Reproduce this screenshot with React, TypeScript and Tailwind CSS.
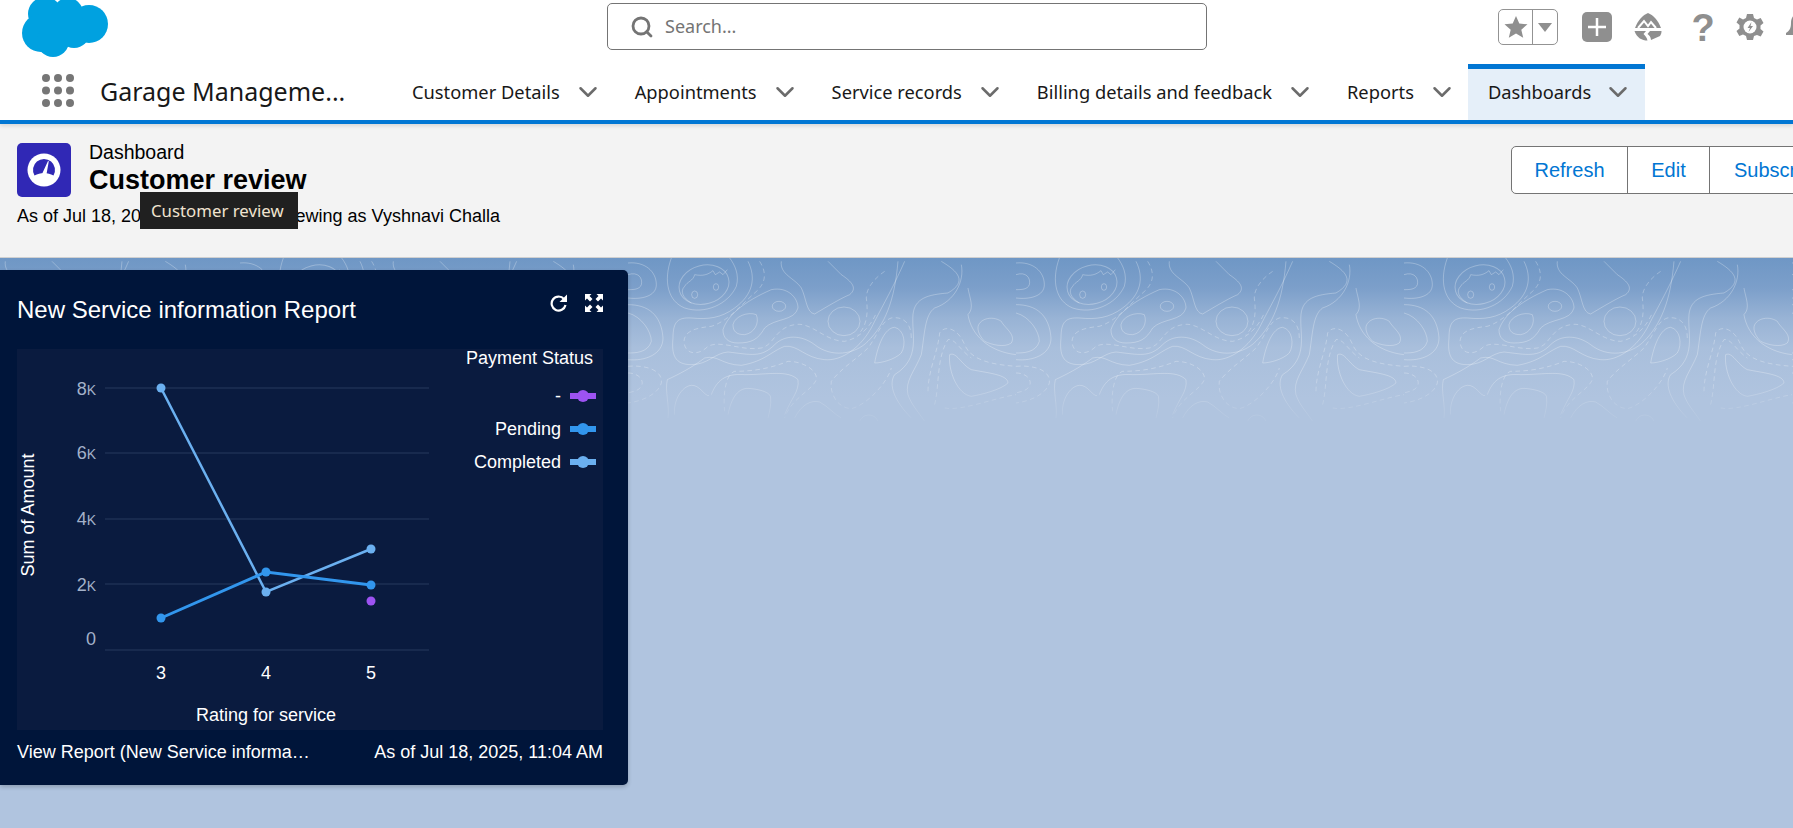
import { ChevronDown, Search } from "lucide-react";

const navItems = ["Customer Details", "Appointments", "Service records", "Billing details and feedback", "Reports"];

const yTicks = [
  { label: "8", unit: "K", y: 388, ty: 389 },
  { label: "6", unit: "K", y: 453, ty: 453 },
  { label: "4", unit: "K", y: 519, ty: 519 },
  { label: "2", unit: "K", y: 584, ty: 585 },
  { label: "0", unit: "", y: 650, ty: 639 },
];

const legend = [
  { label: "-", color: "#9d53f2", y: 396 },
  { label: "Pending", color: "#3296ed", y: 429 },
  { label: "Completed", color: "#6bb0f0", y: 462 },
];

// contour lines behind the dashboard, one tile of the repeating banner
const solidLines = [
  "M130 0C105 70 120 130 170 150C230 170 300 140 325 85C335 50 320 20 305 0",
  "M190 135C165 120 155 100 170 85C178 70 195 70 200 50C225 55 240 50 255 38L262 50L275 42L285 50L298 35",
  "M0 50C30 40 45 60 40 80C35 95 15 95 0 95",
  "M0 15C50 10 85 40 85 80C85 115 40 125 0 120",
  "M0 140C60 140 100 170 105 240C105 290 50 310 0 305",
  "M0 165C40 175 70 220 70 250C60 285 20 285 0 285",
  "M360 10C385 60 375 110 320 150C280 180 240 185 190 180C150 178 135 190 135 240C130 290 140 320 190 320C240 320 260 285 300 282C370 290 400 300 440 260C470 230 520 230 560 260C610 300 680 290 720 250C770 200 800 130 810 10",
  "M285 215C300 170 350 130 430 95C480 85 510 120 510 150C500 190 440 180 410 210C390 245 370 255 330 255C300 255 285 240 285 215Z",
  "M315 200C320 175 360 160 385 170C395 195 380 225 350 230C325 230 315 220 315 200Z",
  "M460 10C455 50 500 60 520 90C535 120 535 165 560 168C590 150 640 120 665 110C690 90 670 70 640 50L600 10",
  "M830 10C790 100 760 150 735 200C700 270 640 310 590 305C530 300 510 260 470 265C430 280 410 310 340 322C280 320 270 290 230 300C190 330 150 350 118 365C110 400 125 440 120 480",
  "M740 315C750 260 770 210 800 208C830 215 835 260 820 285C800 305 760 315 740 315Z",
  "M940 10C990 40 1020 70 960 105C900 110 860 120 855 170C850 230 880 300 800 350C780 380 800 430 850 480",
  "M1000 20C1010 70 980 130 920 150C890 170 890 230 880 290C860 340 830 370 840 410C850 440 870 460 890 490",
  "M1020 90C1025 120 1040 150 1020 170C1030 230 1080 280 1164 290",
  "M1050 210C1050 185 1090 170 1120 190C1130 210 1165 230 1150 255C1130 270 1090 260 1070 250C1060 240 1050 225 1050 210Z",
  "M965 290C985 280 1000 320 1030 335C1080 345 1140 350 1140 375C1120 395 1060 410 1030 415C990 410 960 340 965 290Z",
  "M250 410C265 370 290 345 350 350C420 350 480 335 510 365C515 400 490 420 470 470",
  "M300 470C310 420 330 385 370 392C400 395 430 405 428 420C430 440 425 460 420 480",
  "M140 470C135 430 160 385 190 382C215 380 230 415 243 413",
  "M500 480C520 440 550 425 575 432C600 445 620 470 640 480",
  "M695 490C705 465 740 465 750 490",
];

const dashedLines = [
  "M395 10C420 50 410 80 380 105C340 140 300 190 250 205C200 210 170 220 168 250C170 290 210 295 240 265C280 245 340 280 400 270C440 260 440 210 500 200C550 190 590 250 650 250C700 240 730 200 745 165",
  "M770 40C740 60 715 90 715 120C720 160 720 200 690 230",
  "M850 240C850 190 820 175 790 180C760 190 750 230 720 270C690 300 640 330 610 370C605 410 630 450 670 452C720 440 780 370 790 330",
  "M0 325C60 320 105 340 100 375C90 410 40 430 0 435",
  "M0 345C30 345 50 365 40 385C30 400 15 400 0 405",
  "M290 460C285 420 290 350 320 340C380 340 430 330 480 310C530 310 570 340 565 365C550 400 490 420 470 480",
  "M900 400C900 340 930 280 935 225C950 200 990 210 1010 260C1030 310 1100 320 1164 325",
  "M920 440C935 380 925 300 960 245C980 240 1000 280 1030 300",
  "M950 450C1000 460 1100 420 1164 410",
];

function SalesforceLogo() {
  return (
    <svg width="86" height="58" viewBox="22 0 86 58" className="block" fill="#00a1e0">
      <circle cx="45" cy="14" r="17" />
      <circle cx="68" cy="13" r="15" />
      <circle cx="89" cy="24" r="19" />
      <circle cx="41" cy="33" r="19" />
      <circle cx="53" cy="41" r="16" />
      <circle cx="74" cy="32" r="16" />
      <rect x="40" y="12" width="40" height="30" />
    </svg>
  );
}

function Waffle() {
  return (
    <svg width="34" height="33" viewBox="0 0 34 33" fill="#767676">
      {[4, 16.5, 29].map((cy) =>
        [5, 17, 29].map((cx) => <circle key={`${cx}-${cy}`} cx={cx} cy={cy} r="4" />),
      )}
    </svg>
  );
}

function GaugeIcon() {
  return (
    <div className="flex h-[54px] w-[54px] items-center justify-center rounded-[5px] bg-[#3028b5]">
      <svg width="34" height="34" viewBox="0 0 34 34">
        <circle cx="17" cy="17" r="16.5" fill="#fff" />
        <path d="M7.500 22.500A11 11 0 1 1 26.500 22.500C23.500 20.800 20.500 20.300 17 20.300S10.500 20.800 7.500 22.500Z" fill="#3028b5" />
        <path d="M14.800 21.500L21 8l.8.3-2.500 14a2.400 2.400 0 0 1-4.500-.8z" fill="#fff" />
      </svg>
    </div>
  );
}

function TrailheadIcon() {
  return (
    <svg width="30" height="30" viewBox="0 0 30 30" fill="#8f8f8f">
      <path d="M15 1C20 3 25 8 28 16H2C5 8 10 3 15 1z" />
      <path d="M5 16l6-7 4 5 3-4 5 6" fill="none" stroke="#fff" strokeWidth="2" />
      <path d="M1.500 19H28.500C28.500 21 28 22.500 27 24L18 28C18 25 16 23 14.500 22L17 19H13L10.500 22C12 23.500 14 25.500 14.500 28.500C9 28.500 4 26 1.500 19z" />
    </svg>
  );
}

function GearIcon() {
  return (
    <svg width="28" height="28" viewBox="0 0 28 28">
      <path
        fill="#8f8f8f"
        d="M11 1h6l1 4 3 1.500 3.700-1.500 2.800 5-3 2.500v3.500l3 2.500-2.800 5-3.700-1.500L18 23l-1 4h-6l-1-4-3-1.500-3.700 1.500-2.800-5 3-2.500v-3.500l-3-2.500 2.800-5L7 6.500 10 5z"
      />
      <circle cx="14" cy="14" r="6.500" fill="#fff" />
      <path fill="#8f8f8f" d="M15.500 9l-4 6h2.500l-1.500 4 4.500-6h-2.500z" />
    </svg>
  );
}

function ContourBanner() {
  return (
    <svg className="absolute inset-x-0 top-0 h-[190px] w-full" aria-hidden="true">
      <defs>
        <linearGradient id="fade" x1="0" y1="0" x2="0" y2="1">
          <stop offset="0" stopColor="#fff" />
          <stop offset="0.62" stopColor="#fff" />
          <stop offset="0.92" stopColor="#000" />
        </linearGradient>
        <mask id="fadeMask">
          <rect width="100%" height="190" fill="url(#fade)" />
        </mask>
        <pattern id="contours" x="240" y="0" width="388" height="190" patternUnits="userSpaceOnUse">
          <g transform="scale(0.3333)" fill="none" stroke="#fff" strokeOpacity="0.28" strokeWidth="3">
            {solidLines.map((d) => (
              <path key={d} d={d} />
            ))}
            <ellipse cx="228" cy="80" rx="76" ry="58" transform="rotate(-15 228 80)" />
            <ellipse cx="200" cy="110" rx="9" ry="11" />
            <ellipse cx="264" cy="87" rx="8" ry="10" />
            <ellipse cx="453" cy="145" rx="20" ry="15" />
            <ellipse cx="648" cy="190" rx="48" ry="43" />
            <g strokeDasharray="14 10">
              {dashedLines.map((d) => (
                <path key={d} d={d} />
              ))}
            </g>
          </g>
        </pattern>
      </defs>
      <rect width="100%" height="190" fill="url(#contours)" mask="url(#fadeMask)" />
    </svg>
  );
}

function ReportChart() {
  // coordinates are page pixels minus the chart panel's origin (17, 349)
  const ox = 17;
  const oy = 349;
  const completed = [
    [161, 388],
    [266, 592],
    [371, 549],
  ];
  const pending = [
    [161, 618],
    [266, 572],
    [371, 585],
  ];
  const pts = (list: number[][]) => list.map(([x, y]) => `${x - ox},${y - oy}`).join(" ");
  return (
    <svg width="586" height="381" className="block bg-[#0a1b3f]" fontFamily="'Liberation Sans', Arial, sans-serif">
      {yTicks.map((t) => (
        <g key={t.label}>
          <line x1={105 - ox} x2={429 - ox} y1={t.y - oy} y2={t.y - oy} stroke="#1e3054" strokeWidth="1.500" />
          <text x={96 - ox} y={t.ty - oy + 6} textAnchor="end" fontSize="18" fill="#a3b1c9">
            {t.label}
            <tspan fontSize="14">{t.unit}</tspan>
          </text>
        </g>
      ))}
      <polyline points={pts(completed)} fill="none" stroke="#6bb0f0" strokeWidth="2.500" />
      <polyline points={pts(pending)} fill="none" stroke="#3296ed" strokeWidth="3" />
      {pending.map(([x, y]) => (
        <circle key={x} cx={x - ox} cy={y - oy} r="4.500" fill="#3296ed" />
      ))}
      {completed.map(([x, y]) => (
        <circle key={x} cx={x - ox} cy={y - oy} r="4.500" fill="#6bb0f0" />
      ))}
      <circle cx={371 - ox} cy={601 - oy} r="4.500" fill="#9d53f2" />
      {[
        ["3", 161],
        ["4", 266],
        ["5", 371],
      ].map(([label, x]) => (
        <text key={label} x={Number(x) - ox} y={679 - oy} textAnchor="middle" fontSize="18" fill="#fff">
          {label}
        </text>
      ))}
      <text x={266 - ox} y={721 - oy} textAnchor="middle" fontSize="18" fill="#fff">
        Rating for service
      </text>
      <text
        transform={`translate(${34 - ox} ${515 - oy}) rotate(-90)`}
        textAnchor="middle"
        fontSize="18"
        fill="#fff"
      >
        Sum of Amount
      </text>
      <text x={593 - ox} y={364 - oy} textAnchor="end" fontSize="18" fill="#fff">
        Payment Status
      </text>
      {legend.map((l) => (
        <g key={l.label}>
          <text x={561 - ox} y={l.y - oy + 6} textAnchor="end" fontSize="18" fill="#fff">
            {l.label}
          </text>
          <rect x={570 - ox} y={l.y - oy - 3} width="26" height="6" fill={l.color} />
          <circle cx={583 - ox} cy={l.y - oy} r="6" fill={l.color} />
        </g>
      ))}
    </svg>
  );
}

export default function App() {
  return (
    <div className="relative flex h-screen w-full flex-col overflow-hidden bg-[#b0c4df] font-['Liberation_Sans',Arial,sans-serif] text-black">
      <header className="relative z-10 bg-white font-['Noto_Sans',sans-serif] shadow-[0_2px_4px_rgba(0,0,0,0.12)]">
        <div className="flex h-[64px] items-start">
          <div className="ml-[22px] w-[86px] shrink-0">
            <SalesforceLogo />
          </div>
          <div className="ml-[499px] mt-[3px] flex h-[47px] w-[600px] shrink-0 items-center rounded-[5px] border border-[#747474] pl-[22px] text-[18px] text-[#747474]">
            <Search className="h-[24px] w-[24px] text-[#747474]" strokeWidth={2.800} />
            <span className="ml-[11px]">Search...</span>
          </div>
          <div className="ml-[291px] mt-[9px] flex h-[36px] w-[60px] shrink-0 items-center rounded-[5px] border border-[#939393]">
            <div className="flex h-full w-[34px] items-center justify-center border-r border-[#939393]">
              <svg width="24" height="24" viewBox="0 0 24 24" fill="#8f8f8f">
                <path d="M12 1l3.300 7.600 8.200.7-6.200 5.400 1.900 8L12 18.500 4.800 22.700l1.900-8L.5 9.300l8.200-.7z" />
              </svg>
            </div>
            <div className="flex flex-1 items-center justify-center">
              <svg width="14" height="9" viewBox="0 0 14 9" fill="#8f8f8f">
                <path d="M0 0h14L7 9z" />
              </svg>
            </div>
          </div>
          <div className="ml-[24px] mt-[12px] flex h-[30px] w-[30px] shrink-0 items-center justify-center rounded-[5px] bg-[#8f8f8f]">
            <svg width="20" height="20" viewBox="0 0 20 20" stroke="#fff" strokeWidth="2.500">
              <path d="M10 1v18M1 10h18" />
            </svg>
          </div>
          <div className="ml-[21px] mt-[12px] shrink-0">
            <TrailheadIcon />
          </div>
          <div className="ml-[28px] mt-[9px] w-[24px] shrink-0 text-center font-['Liberation_Sans',sans-serif] text-[38px] leading-[38px] font-bold text-[#8f8f8f]">
            ?
          </div>
          <div className="ml-[21px] mt-[13px] shrink-0">
            <GearIcon />
          </div>
          <svg className="ml-[21px] mt-[13px] shrink-0" width="26" height="28" viewBox="0 0 26 28" fill="#8f8f8f">
            <path d="M13 1c5 0 7 4 7 9 0 6 2 8 5 10v2H1v-2c3-2 5-4 5-10 0-5 2-9 7-9z" />
          </svg>
        </div>
        <div className="flex h-[60px] items-stretch border-b-4 border-[#0176d3]">
          <div className="ml-[41px] flex w-[59px] shrink-0 items-center pb-[4px]">
            <Waffle />
          </div>
          <div className="flex w-[296px] shrink-0 items-center text-[25px] text-[#181818]">Garage Manageme...</div>
          {navItems.map((item) => (
            <div key={item} className="flex shrink-0 items-center px-[16px] text-[#181818]">
              <span className="text-[18.300px]">{item}</span>
              <ChevronDown className="ml-[13px] h-[30px] w-[30px] text-[#6b6b6b]" strokeWidth={2} />
            </div>
          ))}
          <div className="-ml-[5px] flex shrink-0 items-center border-t-[5px] border-[#0176d3] bg-[#e5eff9] pb-[5px] pl-[20px] pr-[12px] text-[#181818]">
            <span className="text-[18.300px]">Dashboards</span>
            <ChevronDown className="ml-[12px] h-[30px] w-[30px] text-[#6b6b6b]" strokeWidth={2} />
          </div>
        </div>
      </header>

      <section className="relative flex h-[134px] shrink-0 justify-between border-b border-[#d0d0d0] bg-[#f3f3f3] pl-[17px] pt-[19px]">
        <div>
          <div className="flex items-start">
            <GaugeIcon />
            <div className="-mt-[3px] ml-[18px]">
              <p className="text-[19.500px] leading-[24px]">Dashboard</p>
              <h1 className="text-[27px] leading-[32px] font-bold">Customer review</h1>
            </div>
          </div>
          <p className="mt-[9px] text-[18px] leading-[20px]">
            As of Jul 18, 2025, 11:04 AM<span className="mx-[14px]">·</span>Viewing as Vyshnavi Challa
          </p>
          <div className="absolute left-[140px] top-[68px] bg-[#202020] pl-[11px] pr-[14px] py-[7px] font-['Noto_Sans',sans-serif] text-[16.800px] leading-[23px] text-[#f0e4d0]">
            Customer review
          </div>
        </div>
        <div className="-mr-[59px] mt-[3px] flex h-[48px] w-[341px] shrink-0 rounded-[5px] border border-[#747474] bg-white text-[20px] text-[#0176d3]">
          <div className="flex w-[116px] items-center justify-center border-r border-[#747474]">Refresh</div>
          <div className="flex w-[82px] items-center justify-center border-r border-[#747474]">Edit</div>
          <div className="flex flex-1 items-center pl-[24px]">Subscribe</div>
        </div>
      </section>

      <main className="relative flex-1 bg-[linear-gradient(180deg,#6f97c5_0px,#7c9fca_30px,#98b3d5_60px,#a9bfdc_90px,#b0c4df_140px)] pt-[12px]">
        <ContourBanner />
        <div className="relative w-[628px] rounded-r-[5px] bg-[#00153a] pl-[17px] pr-[25px] shadow-[0_2px_4px_rgba(0,0,0,0.2)]">
          <div className="flex h-[79px] items-start justify-between">
            <h2 className="mt-[26px] text-[24px] leading-[28px] text-white">New Service information Report</h2>
            <div className="mt-[24px] flex items-center gap-[17px]">
              <svg width="18" height="18" viewBox="0 0 18 18" fill="none" stroke="#fff" strokeWidth="2.200">
                <path d="M14 5A7 7 0 1 0 15.500 11" />
                <path d="M17 0.500v7.500H9.500z" fill="#fff" stroke="none" />
              </svg>
              <svg width="18" height="18" viewBox="0 0 18 18" fill="#fff">
                <path d="M0 0h6.500L4.500 2l3 3L5 7.500l-3-3-2 2zM18 0v6.500l-2-2-3 3L10.500 5l3-3-2-2zM0 18v-6.500l2 2 3-3L7.500 13l-3 3 2 2zM18 18h-6.500l2-2-3-3 2.500-2.500 3 3 2-2z" />
              </svg>
            </div>
          </div>
          <ReportChart />
          <div className="flex h-[55px] items-start justify-between pt-[12px] text-[18px] leading-[20px] whitespace-nowrap text-white">
            <span>View Report (New Service informa…</span>
            <span>As of Jul 18, 2025, 11:04 AM</span>
          </div>
        </div>
      </main>
    </div>
  );
}
